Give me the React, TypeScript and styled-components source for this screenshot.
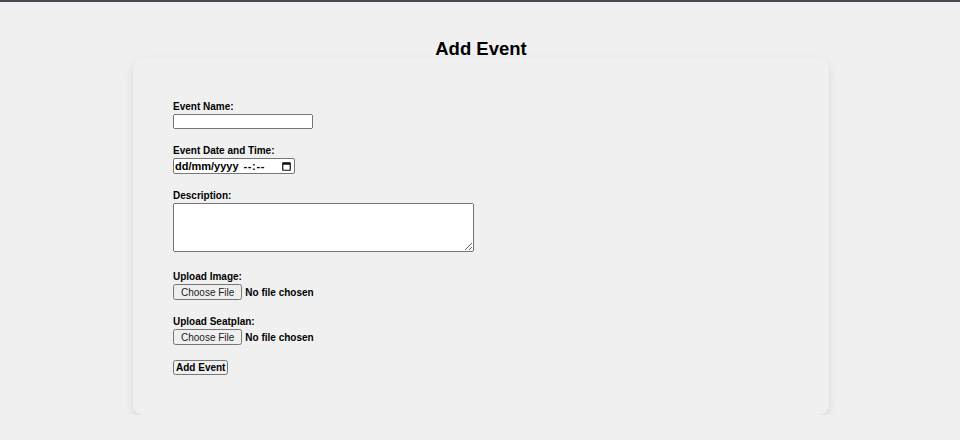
import React from "react";
import styled, { createGlobalStyle } from "styled-components";

const GlobalStyle = createGlobalStyle`
  html, body {
    margin: 0;
    padding: 0;
    background: #f0f0f0;
  }
  body {
    font-family: "Liberation Sans", Arial, sans-serif;
    color: #000;
  }
`;

const TopBar = styled.div`
  height: 2px;
  background: #474a54;
`;

const Page = styled.main`
  display: flex;
  flex-direction: column;
  align-items: center;
  padding: 36px 0 0 2px;
`;

const Title = styled.h2`
  margin: 0 0 -2px;
  font-size: 18.5px;
  line-height: 22px;
  font-weight: bold;
  text-align: center;
  position: relative;
  z-index: 1;
`;

const Card = styled.form`
  width: 696px;
  box-sizing: border-box;
  padding: 43px 40px 40px;
  background: #f0f0f0;
  border-radius: 10px;
  box-shadow: 0 4px 10px rgba(0, 0, 0, 0.1);
  display: flex;
  flex-direction: column;
  align-items: flex-start;
`;

const Group = styled.div<{ $space: number }>`
  display: flex;
  flex-direction: column;
  align-items: flex-start;
  margin-bottom: ${(p) => p.$space}px;
`;

const Label = styled.label`
  display: block;
  font-size: 10px;
  line-height: 12px;
  font-weight: bold;
  margin-bottom: 1px;
`;

const TextInput = styled.input`
  width: 140px;
  height: 15px;
  box-sizing: border-box;
  font-family: "Liberation Sans", Arial, sans-serif;
  font-size: 10px;
  padding: 0 2px;
  margin: 0;
`;

const DateBox = styled.div`
  width: 122px;
  height: 16px;
  box-sizing: border-box;
  display: flex;
  align-items: center;
  padding: 0 3px 0 1px;
  background: #fff;
  border: 1px solid #767676;
  border-radius: 2px;
  cursor: text;
`;

const DateSegment = styled.span<{ $spacing?: number; $gap?: number }>`
  font-family: "Liberation Sans", Arial, sans-serif;
  font-size: 11px;
  font-weight: bold;
  line-height: 14px;
  white-space: pre;
  letter-spacing: ${(p) => p.$spacing ?? 0}px;
  margin-left: ${(p) => p.$gap ?? 0}px;
`;

const CalendarIcon = styled.svg`
  width: 9px;
  height: 9px;
  display: block;
  margin-left: auto;
`;

const TextArea = styled.textarea`
  width: 301px;
  height: 49px;
  box-sizing: border-box;
  font-family: "Liberation Sans", Arial, sans-serif;
  font-size: 10px;
  margin: 0;
  display: block;
`;

const FileInput = styled.input`
  font-family: "Liberation Sans", Arial, sans-serif;
  font-size: 10px;
  font-weight: bold;
  height: 16px;
  margin: 0;
  &::file-selector-button {
    font-family: "Liberation Sans", Arial, sans-serif;
    font-size: 10px;
    font-weight: normal;
    height: 16px;
    padding: 0 6px;
    margin-right: 3px;
    color: #222;
  }
`;

const SubmitButton = styled.button`
  font-family: "Liberation Sans", Arial, sans-serif;
  font-size: 10px;
  font-weight: bold;
  height: 15px;
  padding: 0 1px;
  margin: 0;
  line-height: 11px;
`;

export default function App() {
  return (
    <>
      <GlobalStyle />
      <TopBar />
      <Page>
        <Title>Add Event</Title>
        <Card onSubmit={(e) => e.preventDefault()}>
          <Group $space={16}>
            <Label htmlFor="eventName">Event Name:</Label>
            <TextInput id="eventName" type="text" />
          </Group>
          <Group $space={16}>
            <Label htmlFor="eventDate">Event Date and Time:</Label>
            <DateBox id="eventDate" role="textbox" aria-label="Event Date and Time">
              <DateSegment>dd/mm/yyyy</DateSegment>
              <DateSegment $gap={5} $spacing={0.6}>--:--</DateSegment>
              <CalendarIcon viewBox="0 0 9 9" aria-hidden="true">
                <rect x="0.75" y="0.75" width="7.5" height="7.5" rx="0.6" fill="none" stroke="#111" strokeWidth="1.2" />
                <rect x="0.75" y="0.75" width="7.5" height="2" fill="#111" />
              </CalendarIcon>
            </DateBox>
          </Group>
          <Group $space={19}>
            <Label htmlFor="description">Description:</Label>
            <TextArea id="description" />
          </Group>
          <Group $space={16}>
            <Label htmlFor="image">Upload Image:</Label>
            <FileInput id="image" type="file" />
          </Group>
          <Group $space={15}>
            <Label htmlFor="seatplan">Upload Seatplan:</Label>
            <FileInput id="seatplan" type="file" />
          </Group>
          <SubmitButton type="submit">Add Event</SubmitButton>
        </Card>
      </Page>
    </>
  );
}
